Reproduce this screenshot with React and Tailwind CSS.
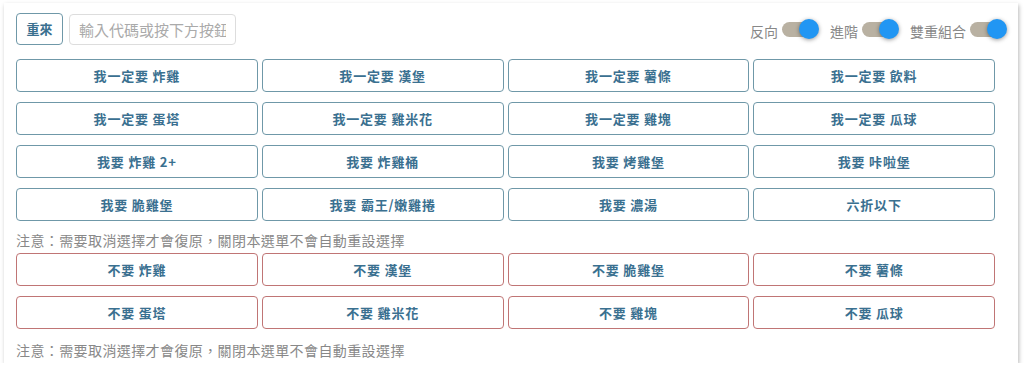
const WANT = [
  '我一定要 炸雞',
  '我一定要 漢堡',
  '我一定要 薯條',
  '我一定要 飲料',
  '我一定要 蛋塔',
  '我一定要 雞米花',
  '我一定要 雞塊',
  '我一定要 瓜球',
  '我要 炸雞 2+',
  '我要 炸雞桶',
  '我要 烤雞堡',
  '我要 咔啦堡',
  '我要 脆雞堡',
  '我要 霸王/嫩雞捲',
  '我要 濃湯',
  '六折以下',
];

const DONT = [
  '不要 炸雞',
  '不要 漢堡',
  '不要 脆雞堡',
  '不要 薯條',
  '不要 蛋塔',
  '不要 雞米花',
  '不要 雞塊',
  '不要 瓜球',
];

const NOTE = '注意：需要取消選擇才會復原，關閉本選單不會自動重設選擇';

function Toggle({ label }) {
  return (
    <div className="flex items-center gap-[4px]">
      <span className="text-[14px] leading-[20px] text-[#888] mt-[4px]">{label}</span>
      <span className="relative flex h-[20px] w-[37px] items-center">
        <span className="h-[15px] w-[34px] rounded-full bg-[#b9b1a2]" />
        <span className="absolute right-0 top-0 h-[20px] w-[20px] rounded-full bg-[#2196f3] shadow-[0_1px_4px_rgba(0,0,0,0.4)]" />
      </span>
    </div>
  );
}

function OptionButton({ label, danger }) {
  return (
    <button
      type="button"
      className={`flex h-[33px] items-center justify-center rounded-[4px] border bg-white text-[13px] font-bold tracking-[0.8px] text-[#3a7090] ${
        danger ? 'border-[#c07575]' : 'border-[#6f98a8]'
      }`}
    >
      {label}
    </button>
  );
}

export default function App() {
  return (
    <div
      className="bg-white pl-[4px] pt-[3px]"
      style={{ fontFamily: '"Noto Sans CJK TC", "Noto Sans", sans-serif' }}
    >
      <div className="w-[1014px] bg-white pl-[12px] pr-[11px] pt-[10px] pb-[3px] shadow-[1px_2px_4px_rgba(0,0,0,0.28)]">
        {/* top bar */}
        <div className="flex h-[32px] items-center justify-between">
          <div className="flex items-center gap-[6px]">
            <button
              type="button"
              className="h-[32px] w-[47px] rounded-[4px] border border-[#6f98a8] bg-white text-[13px] font-bold text-[#3a7090]"
            >
              重來
            </button>
            <input
              className="h-[31px] w-[167px] rounded-[4px] border border-[#ddd] px-[9px] text-[15px] text-[#555] placeholder:text-[#aaa] outline-none"
              placeholder="輸入代碼或按下方按鈕."
            />
          </div>
          <div className="flex items-center gap-[11px]">
            <Toggle label="反向" />
            <Toggle label="進階" />
            <Toggle label="雙重組合" />
          </div>
        </div>

        {/* want grid */}
        <div className="mr-[12px] mt-[14px] grid grid-cols-4 gap-x-[4px] gap-y-[10px]">
          {WANT.map((w) => (
            <OptionButton key={w} label={w} />
          ))}
        </div>

        <div className="mt-[9px] text-[14px] leading-[20px] tracking-[0.4px] text-[#888]">{NOTE}</div>

        {/* don't grid */}
        <div className="mr-[12px] mt-[3px] grid grid-cols-4 gap-x-[4px] gap-y-[10px]">
          {DONT.map((d) => (
            <OptionButton key={d} label={d} danger />
          ))}
        </div>

        <div className="mt-[11px] text-[14px] leading-[20px] tracking-[0.4px] text-[#888]">{NOTE}</div>
      </div>
    </div>
  );
}
